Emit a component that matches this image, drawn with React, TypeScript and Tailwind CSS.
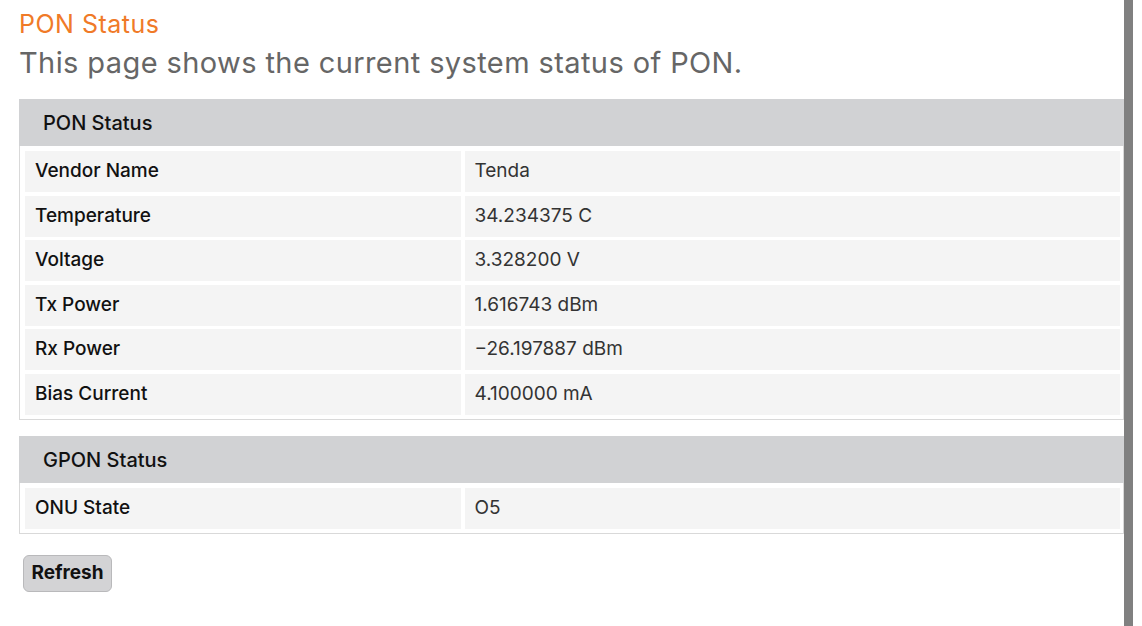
const PON_ROWS: [string, string][] = [
  ['Vendor Name', 'Tenda'],
  ['Temperature', '34.234375 C'],
  ['Voltage', '3.328200 V'],
  ['Tx Power', '1.616743 dBm'],
  ['Rx Power', '\u221226.197887 dBm'],
  ['Bias Current', '4.100000 mA'],
]

const GPON_ROWS: [string, string][] = [['ONU State', 'O5']]

function StatusTable({ title, rows }: { title: string; rows: [string, string][] }) {
  return (
    <div>
      <div className={HEAD}>{title}</div>
      <div className={BODY}>
        {rows.map(([label, value]) => (
          <div key={label} className="grid grid-cols-[436px_1fr] gap-[3.5px]">
            <div className={`${CELL} font-medium text-[#111]`}>{label}</div>
            <div className={`${CELL} text-[#333]`}>{value}</div>
          </div>
        ))}
      </div>
    </div>
  )
}

export default function App() {
  return (
    <div className="flex h-[626px] overflow-hidden bg-white font-['Inter',Arial,sans-serif]">
      <div className="flex-1 pl-[19px]">
        <h1 className="mt-[9px] text-[25px] leading-[30px] tracking-[0.5px] text-[#f07a28]">
          PON Status
        </h1>
        <p className="mt-[6px] text-[29px] leading-[36px] tracking-[0.4px] text-[#666]">
          This page shows the current system status of PON.
        </p>
        <div className="mt-[18px]">
          <StatusTable title="PON Status" rows={PON_ROWS} />
        </div>
        <div className="mt-[16.5px]">
          <StatusTable title="GPON Status" rows={GPON_ROWS} />
        </div>
        <button type="button" className={BTN}>
          Refresh
        </button>
      </div>
      <div className="w-[9px] bg-[#808080]" />
      <div className="w-[9px]" />
    </div>
  )
}

const HEAD =
  'flex h-[47px] items-center bg-[#d1d2d4] pl-[24px] text-[20px] font-medium text-[#111]'
const BODY =
  'flex flex-col gap-[3.5px] border-x border-b border-[#d9d9d9] pb-[4px] pl-[5px] pr-[3px] pt-[5px]'
const CELL = 'flex h-[41px] items-center bg-[#f4f4f4] pl-[10px] text-[19px]'
const BTN =
  'ml-[4px] mt-[21px] h-[37px] w-[89px] rounded-[6px] border border-[#b9b9bb] bg-[#d3d3d5] text-[19px] font-bold text-[#111]'
